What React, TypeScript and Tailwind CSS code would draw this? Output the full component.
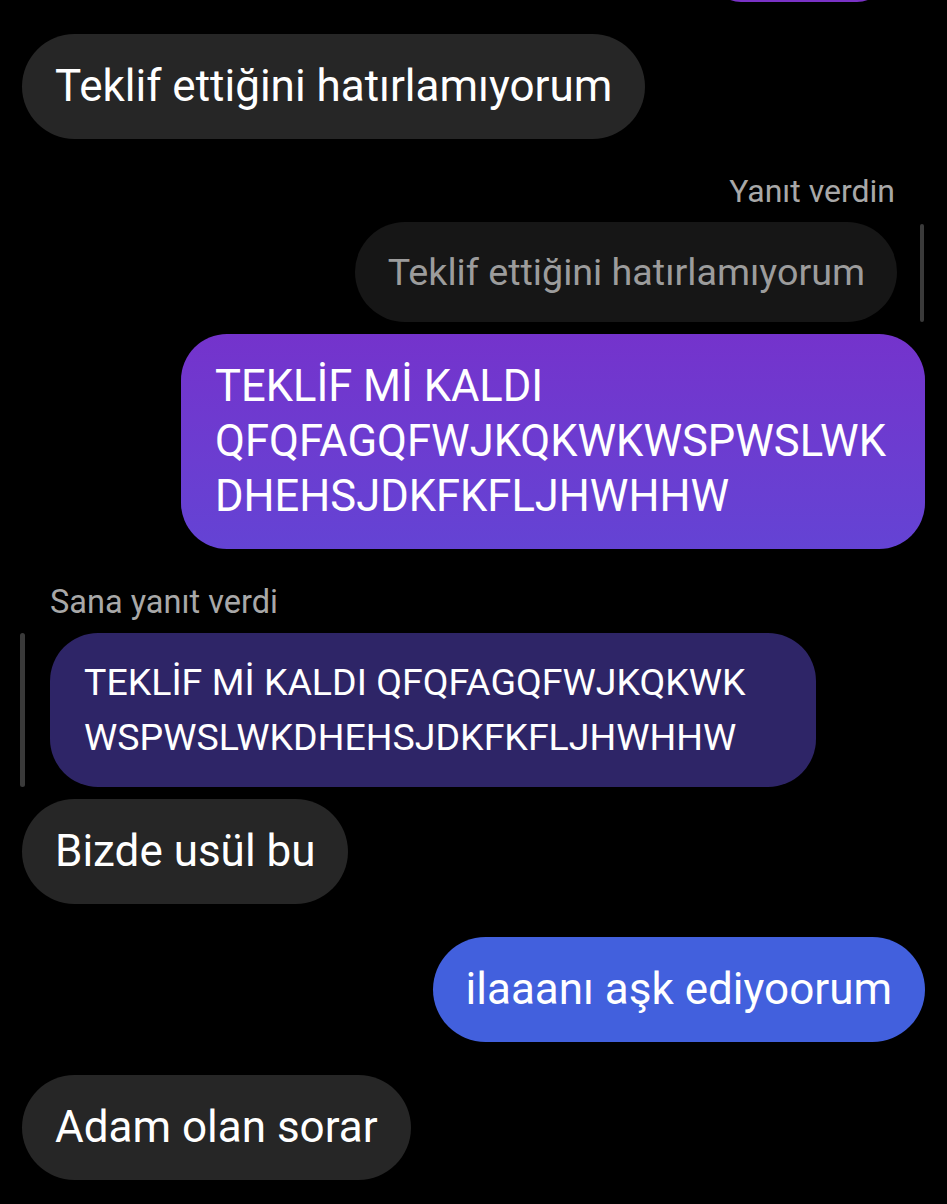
const font = { fontFamily: "Roboto, 'Noto Sans', sans-serif" };

function Incoming({ children }: { children: React.ReactNode }) {
  return (
    <div className="flex">
      <div className="rounded-full bg-[#262626] px-[33px] py-[25px] text-[44px] leading-[55px] text-white">
        {children}
      </div>
    </div>
  );
}

export default function App() {
  return (
    <div className="min-h-[1204px] overflow-hidden bg-black px-[22px]" style={font}>
      {/* tail of the previous sent bubble */}
      <div className="flex justify-end pr-[38px]">
        <div className="-mt-[60px] h-[62px] w-[176px] rounded-[30px] bg-[#7a32c6]" />
      </div>

      <div className="mt-[32px]">
        <Incoming>Teklif ettiğini hatırlamıyorum</Incoming>
      </div>

      <p className="mt-[32px] pr-[30px] text-right text-[32px] leading-[40px] text-[#a8a8a8]">
        Yanıt verdin
      </p>
      <div className="mt-[11px] flex justify-end gap-[23px] pr-[1px]">
        <div className="h-[100px] rounded-full bg-[#161616] pl-[33px] pr-[32px] text-[37.7px] leading-[100px] text-[#9c9c9c]">
          Teklif ettiğini hatırlamıyorum
        </div>
        <div className="mt-[2px] h-[98px] w-[4px] rounded-full bg-[#3a3a3a]" />
      </div>

      <div className="mt-[12px] flex justify-end">
        <div className="w-[744px] rounded-[46px] bg-gradient-to-b from-[#7433cc] to-[#6443d4] px-[34px] py-[25px] text-[43.5px] leading-[55px] text-white">
          TEKLİF Mİ KALDI
          <br />
          QFQFAGQFWJKQKWKWSPWSLWK
          <br />
          DHEHSJDKFKFLJHWHHW
        </div>
      </div>

      <p className="mt-[33px] pl-[28px] text-[32.5px] leading-[40px] text-[#a8a8a8]">
        Sana yanıt verdi
      </p>
      <div className="mt-[11px] flex gap-[25px]">
        <div className="-ml-[2px] w-[5px] rounded-full bg-[#3a3a3a]" />
        <div className="w-[766px] rounded-[48px] bg-[#2e2567] px-[34px] py-[22px] text-[37.5px] leading-[55px] text-white">
          TEKLİF Mİ KALDI QFQFAGQFWJKQKWK
          <br />
          WSPWSLWKDHEHSJDKFKFLJHWHHW
        </div>
      </div>

      <div className="mt-[12px]">
        <Incoming>Bizde usül bu</Incoming>
      </div>

      <div className="mt-[33px] flex justify-end">
        <div className="rounded-full bg-[#4260dd] px-[33px] py-[25px] text-[44px] leading-[55px] text-white">
          ilaaanı aşk ediyoorum
        </div>
      </div>

      <div className="mt-[33px]">
        <Incoming>Adam olan sorar</Incoming>
      </div>
    </div>
  );
}
